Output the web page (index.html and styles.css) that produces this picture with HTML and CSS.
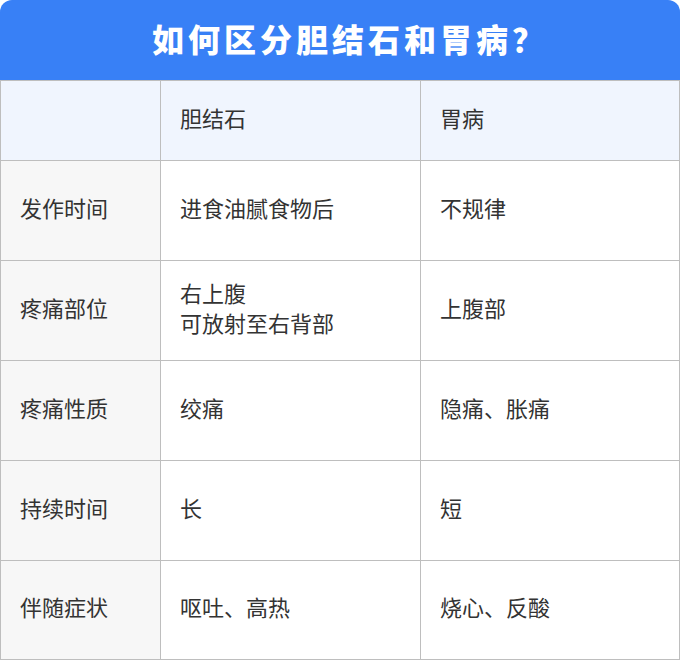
FILE: index.html
```html
<!DOCTYPE html>
<html lang="zh-CN">
<head>
<meta charset="utf-8">
<title>如何区分胆结石和胃病？</title>
<link rel="stylesheet" href="styles.css">
</head>
<body>
<div class="card">
  <div class="title">如何区分胆结石和胃病？</div>
  <div class="grid">
    <div class="cell head first"></div>
    <div class="cell head">胆结石</div>
    <div class="cell head">胃病</div>

    <div class="cell first">发作时间</div>
    <div class="cell">进食油腻食物后</div>
    <div class="cell">不规律</div>

    <div class="cell first">疼痛部位</div>
    <div class="cell">右上腹<br>可放射至右背部</div>
    <div class="cell">上腹部</div>

    <div class="cell first">疼痛性质</div>
    <div class="cell">绞痛</div>
    <div class="cell">隐痛、胀痛</div>

    <div class="cell first">持续时间</div>
    <div class="cell">长</div>
    <div class="cell">短</div>

    <div class="cell first">伴随症状</div>
    <div class="cell">呕吐、高热</div>
    <div class="cell">烧心、反酸</div>
  </div>
</div>
</body>
</html>
```
FILE: styles.css
```css
html, body {
  margin: 0;
  padding: 0;
  background: #ffffff;
}
.card {
  width: 680px;
  height: 660px;
  font-family: "Noto Sans CJK SC", "Noto Sans", sans-serif;
}
.title {
  height: 80px;
  background: #3880f6;
  border-radius: 12px 12px 0 0;
  color: #ffffff;
  font-size: 32px;
  font-weight: 900;
  letter-spacing: 4px;
  display: flex;
  align-items: center;
  justify-content: center;
  padding-left: 20px;
  padding-bottom: 4px;
  box-sizing: border-box;
}
.grid {
  display: grid;
  grid-template-columns: 159px 259px 258px;
  grid-template-rows: 79px 99px 99px 99px 99px 98px;
  gap: 1px;
  padding: 1px;
  background: #bebebe;
}
.cell {
  background: #ffffff;
  color: #333333;
  font-size: 22px;
  line-height: 30px;
  padding-left: 19px;
  padding-bottom: 8px;
  display: flex;
  flex-direction: column;
  justify-content: center;
}
.cell.first {
  background: #f7f7f7;
}
.cell.head {
  background: #f0f5fe;
}
```
